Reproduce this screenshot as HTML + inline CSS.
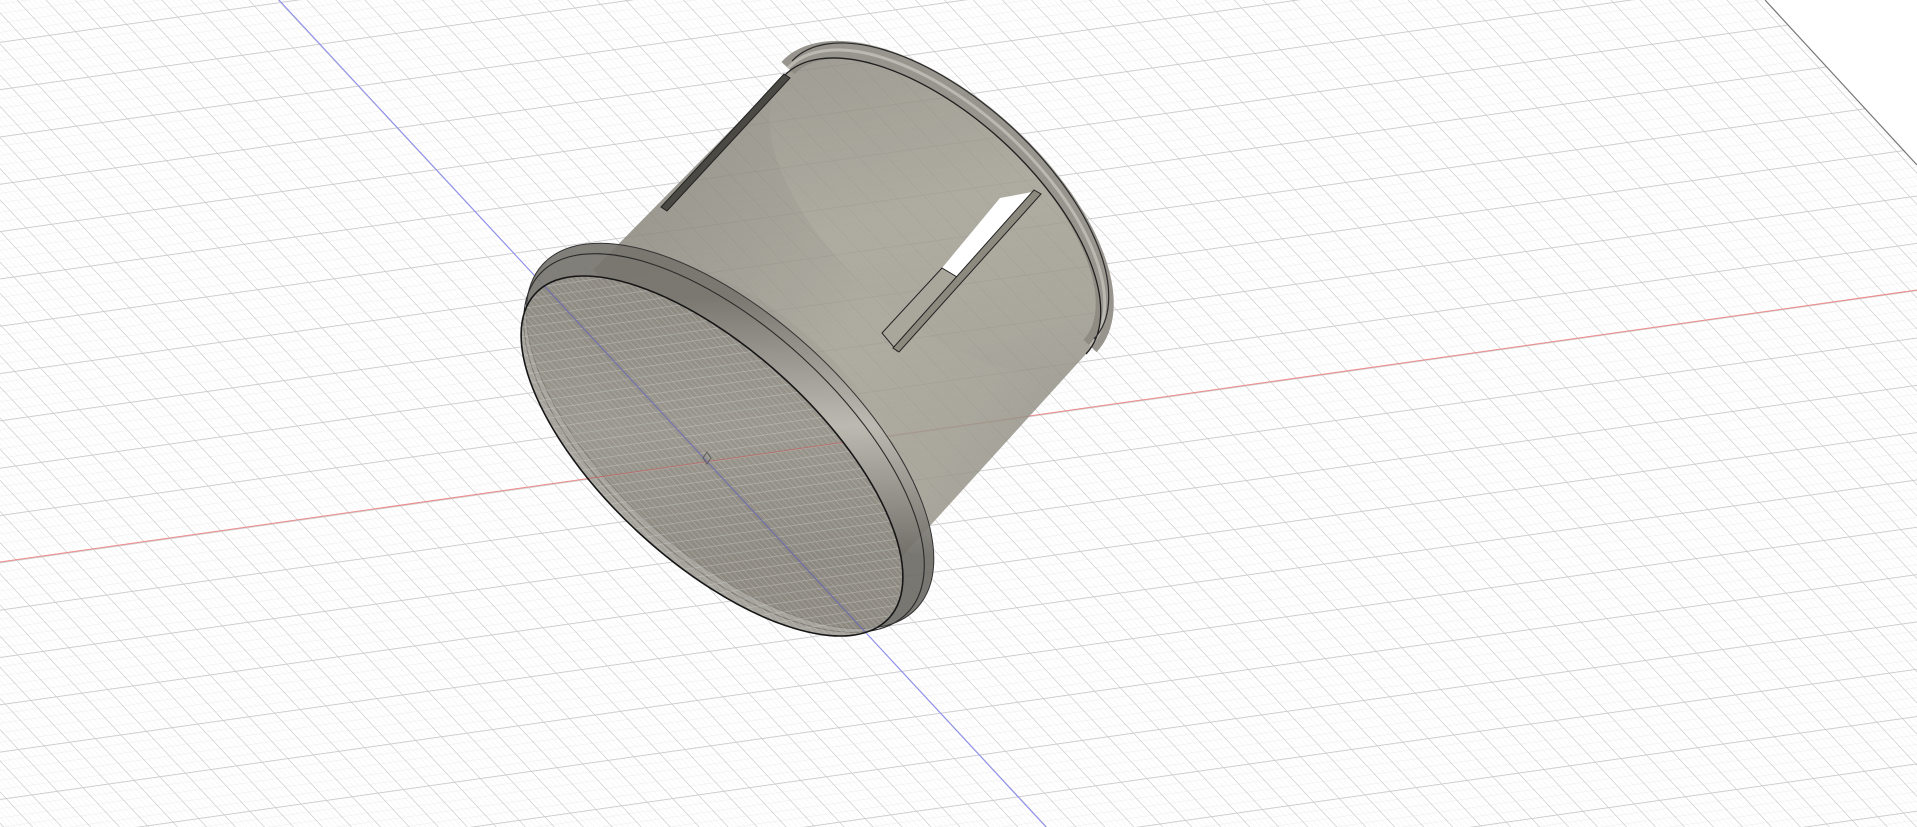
<!DOCTYPE html>
<html><head><meta charset="utf-8"><style>
html,body{margin:0;padding:0;background:#fff;overflow:hidden}
svg{display:block}
</style></head><body>
<svg width="1917" height="827" viewBox="0 0 1917 827" xmlns="http://www.w3.org/2000/svg">
<defs>
<pattern id="g" patternUnits="userSpaceOnUse" width="25.6" height="41.8" patternTransform="matrix(1 -0.142 0.93 1.0 707 462)">
<g stroke="#efefef" stroke-width="0.6" fill="none">
<line x1="5.12" y1="0" x2="5.12" y2="41.8"/><line x1="10.24" y1="0" x2="10.24" y2="41.8"/>
<line x1="15.36" y1="0" x2="15.36" y2="41.8"/><line x1="20.48" y1="0" x2="20.48" y2="41.8"/>
<line x1="0" y1="8.36" x2="25.6" y2="8.36"/><line x1="0" y1="16.72" x2="25.6" y2="16.72"/>
<line x1="0" y1="25.08" x2="25.6" y2="25.08"/><line x1="0" y1="33.44" x2="25.6" y2="33.44"/>
</g>
<g stroke="#cbcbcb" stroke-width="0.9" fill="none">
<line x1="0.4" y1="0" x2="0.4" y2="41.8"/><line x1="0" y1="0.4" x2="25.6" y2="0.4"/>
</g>
</pattern>
<clipPath id="gc"><polygon points="0,0 1765,0 1917,165 1917,827 0,827"/></clipPath>
<clipPath id="face"><ellipse cx="712" cy="456" rx="240" ry="106" transform="rotate(42.5 712 456)"/></clipPath>
<linearGradient id="body" gradientUnits="userSpaceOnUse" x1="600" y1="270" x2="1080" y2="560">
<stop offset="0" stop-color="#8a877d"/><stop offset="0.45" stop-color="#a19e91"/><stop offset="0.7" stop-color="#9c998d"/><stop offset="1" stop-color="#8a877e"/>
</linearGradient>
<linearGradient id="band" gradientUnits="userSpaceOnUse" x1="640" y1="330" x2="820" y2="520">
<stop offset="0" stop-color="#77756e"/><stop offset="0.5" stop-color="#bdbbb3"/><stop offset="1" stop-color="#6e6c66"/>
</linearGradient>
</defs>
<rect width="1917" height="827" fill="#fff"/>
<rect width="1917" height="827" fill="url(#g)" clip-path="url(#gc)"/>
<line x1="1765" y1="0" x2="1917" y2="165" stroke="#777" stroke-width="1.2"/>
<line x1="0" y1="562" x2="1917" y2="290" stroke="#f08a8a" stroke-width="1"/>
<line x1="279" y1="0" x2="1046" y2="827" stroke="#8a8af2" stroke-width="1"/>

<!-- cylinder body -->
<g opacity="0.85">
<polygon points="593,270 784,76 1086,354 899,560" fill="url(#body)"/>
<ellipse cx="935" cy="215" rx="205" ry="100" transform="rotate(42.5 935 215)" fill="url(#body)"/>
<ellipse cx="746" cy="415" rx="205" ry="100" transform="rotate(42.5 746 415)" fill="url(#body)"/>
</g>
<!-- back lip -->
<path d="M784,76 A205,100 42.5 0 1 1086,354" fill="none" stroke="#8d8a82" stroke-width="18" opacity="0.9" transform="translate(4,-8)"/>
<path d="M784,76 A205,100 42.5 0 1 1086,354" fill="none" stroke="#c4c2ba" stroke-width="3" opacity="0.8" transform="translate(4,-8)"/>
<path d="M784,76 A205,100 42.5 0 1 1086,354" fill="none" stroke="#1e1e1e" stroke-width="1.3"/>
<path d="M784,76 A205,100 42.5 0 1 1086,354" fill="none" stroke="#2a2a2a" stroke-width="1.2" transform="translate(8,-15)"/>
<!-- left slot -->
<polygon points="661,207 784,74 790,78 667,211" fill="#4a4944" stroke="#222" stroke-width="1"/>
<!-- right slot gap -->
<polygon points="1000,198 1032,192 957,277 942,268" fill="#fff"/>
<polygon points="882,333 942,268 957,277 897,351" fill="#a9a69b" stroke="#222" stroke-width="1"/>
<polygon points="893,348 1034,190 1041,194 899,352" fill="#8c897f" stroke="#222" stroke-width="1"/>
<!-- flange -->
<g opacity="0.92">
<ellipse cx="730" cy="436" rx="254" ry="119" transform="rotate(42.5 730 436)" fill="url(#band)"/>
</g>
<ellipse cx="724" cy="443" rx="250" ry="116" transform="rotate(42.5 724 443)" fill="none" stroke="#2a2a2a" stroke-width="1.1"/>
<ellipse cx="730" cy="436" rx="254" ry="119" transform="rotate(42.5 730 436)" fill="none" stroke="#333" stroke-width="1"/>
<ellipse cx="712" cy="456" rx="240" ry="106" transform="rotate(42.5 712 456)" fill="#938f86" fill-opacity="0.82"/>
<g clip-path="url(#face)" opacity="0.4">
<rect width="1917" height="827" fill="url(#g)"/>
<line x1="0" y1="562" x2="1917" y2="290" stroke="#e04040" stroke-width="1"/>
<line x1="279" y1="0" x2="1046" y2="827" stroke="#4040e0" stroke-width="1.2"/>
</g>
<ellipse cx="712" cy="456" rx="240" ry="106" transform="rotate(42.5 712 456)" fill="none" stroke="#161616" stroke-width="1.6"/>
<path d="M703,458 l4,-6 l4,6 l-4,6z" fill="none" stroke="#555" stroke-width="0.8"/>
</svg>
</body></html>
